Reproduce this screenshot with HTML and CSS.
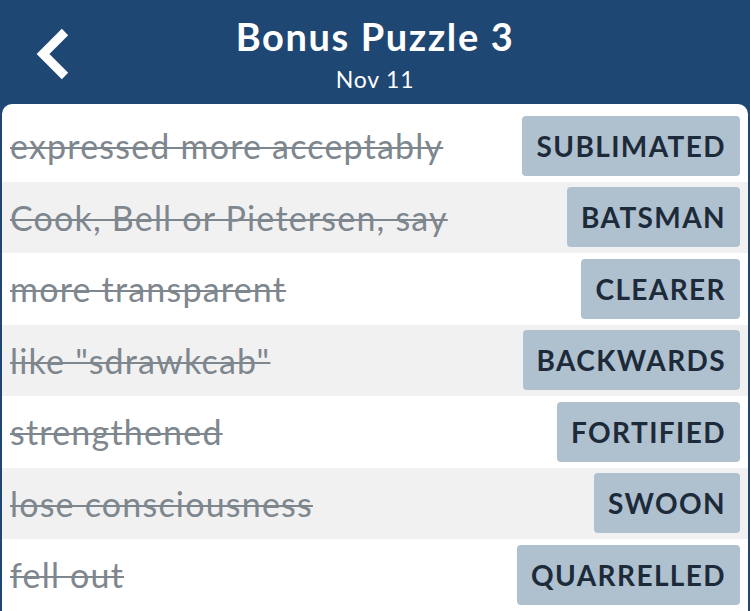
FILE: index.html
```html
<!DOCTYPE html>
<html lang="en">
<head>
    <meta charset="UTF-8">
    <meta name="viewport" content="width=device-width, initial-scale=1.0">
    <title>Bonus Puzzle 3</title>
    <link rel="stylesheet" href="styles.css">
</head>
<body>
    <header class="topbar">
        <button class="back" aria-label="Back">
            <svg width="40" height="56" viewBox="0 0 40 56">
                <path d="M30 4 L8 26 L30 48" fill="none" stroke="#ffffff" stroke-width="9" stroke-linejoin="miter"/>
            </svg>
        </button>
        <div class="heading">
            <h1>Bonus Puzzle 3</h1>
            <div class="date">Nov 11</div>
        </div>
    </header>

    <main class="panel">
        <div class="clue-row">
            <span class="clue">expressed more acceptably</span>
            <span class="answer">SUBLIMATED</span>
        </div>
        <div class="clue-row">
            <span class="clue">Cook, Bell or Pietersen, say</span>
            <span class="answer">BATSMAN</span>
        </div>
        <div class="clue-row">
            <span class="clue">more transparent</span>
            <span class="answer">CLEARER</span>
        </div>
        <div class="clue-row">
            <span class="clue">like "sdrawkcab"</span>
            <span class="answer">BACKWARDS</span>
        </div>
        <div class="clue-row">
            <span class="clue">strengthened</span>
            <span class="answer">FORTIFIED</span>
        </div>
        <div class="clue-row">
            <span class="clue">lose consciousness</span>
            <span class="answer">SWOON</span>
        </div>
        <div class="clue-row">
            <span class="clue">fell out</span>
            <span class="answer">QUARRELLED</span>
        </div>
    </main>
</body>
</html>
```

FILE: styles.css
```css
body {
    margin: 0;
    background-color: #1f4774;
    font-family: Lato, "Open Sans", sans-serif;
    overflow: hidden;
}
.topbar {
    position: relative;
    height: 104px;
    display: flex;
    justify-content: center;
    align-items: flex-start;
}
.back {
    position: absolute;
    left: 35px;
    top: 28px;
    padding: 0;
    border: none;
    background: none;
    cursor: pointer;
}
.heading {
    text-align: center;
    color: #ffffff;
    padding-top: 10px;
}
.heading h1 {
    margin: 0;
    font-size: 38px;
    font-weight: bold;
    letter-spacing: 1.6px;
    line-height: 52px;
}
.date {
    margin-top: 3px;
    font-size: 23px;
    letter-spacing: 0.8px;
    line-height: 28px;
}
.panel {
    margin: 0 2px;
    padding-top: 6px;
    background-color: #ffffff;
    border-radius: 10px 10px 0 0;
    min-height: 520px;
}
.clue-row {
    height: 71.5px;
    display: flex;
    justify-content: space-between;
    align-items: center;
    padding: 0 8px;
}
.clue-row:nth-child(even) {
    background-color: #f1f1f1;
}
.clue {
    font-size: 34px;
    letter-spacing: 1.2px;
    color: #7e868e;
    text-decoration: line-through;
    text-decoration-thickness: 2px;
}
.answer {
    height: 60px;
    line-height: 60px;
    padding: 0 14px;
    background-color: #afc0cf;
    border-radius: 4px;
    color: #1c2a39;
    font-size: 28px;
    font-weight: bold;
    letter-spacing: 1.4px;
}
```
